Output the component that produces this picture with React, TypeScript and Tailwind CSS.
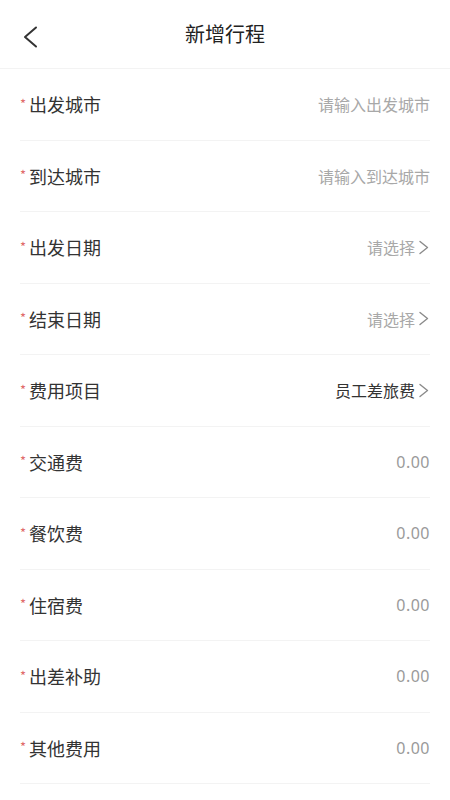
type Row = {
  label: string
  value: string
  kind: 'placeholder' | 'select' | 'value' | 'amount'
}

const rows: Row[] = [
  { label: '出发城市', value: '请输入出发城市', kind: 'placeholder' },
  { label: '到达城市', value: '请输入到达城市', kind: 'placeholder' },
  { label: '出发日期', value: '请选择', kind: 'select' },
  { label: '结束日期', value: '请选择', kind: 'select' },
  { label: '费用项目', value: '员工差旅费', kind: 'value' },
  { label: '交通费', value: '0.00', kind: 'amount' },
  { label: '餐饮费', value: '0.00', kind: 'amount' },
  { label: '住宿费', value: '0.00', kind: 'amount' },
  { label: '出差补助', value: '0.00', kind: 'amount' },
  { label: '其他费用', value: '0.00', kind: 'amount' },
]

function BackArrow() {
  return (
    <svg className="absolute left-[22px] top-[26px]" width="18" height="22" viewBox="0 0 18 22" fill="none">
      <polyline points="14,1.5 3,11 14,20.5" stroke="#333" strokeWidth="2" strokeLinecap="round" strokeLinejoin="round" />
    </svg>
  )
}

function Arrow() {
  return (
    <svg className="ml-[3px]" width="12" height="15" viewBox="0 0 12 15" fill="none">
      <polyline points="2,1.5 9.5,7.5 2,13.5" stroke="#8a8a8a" strokeWidth="1.4" strokeLinecap="round" strokeLinejoin="round" />
    </svg>
  )
}

export default function App() {
  return (
    <div
      className="w-[450px] h-[800px] bg-white overflow-hidden"
      style={{ fontFamily: '"Noto Sans CJK SC", "Noto Sans", sans-serif' }}
    >
      {/* Header */}
      <div className="relative h-[69px] flex items-center justify-center border-b border-[#f3f3f3]">
        <BackArrow />
        <span className="text-[20px] text-[#222] leading-none">新增行程</span>
      </div>

      {/* Form */}
      <div className="mx-5">
        {rows.map((r, i) => (
          <div
            key={i}
            className="h-[71.5px] flex items-center justify-between border-b border-[#f3f3f3]"
          >
            <div className="flex items-center">
              <span className="text-[13px] text-[#e06a6a] leading-none w-[9px] -mt-[2px]">*</span>
              <span className="text-[18px] text-[#333] leading-none">{r.label}</span>
            </div>
            <div className="flex items-center">
              {r.kind === 'amount' ? (
                <span className="text-[16px] text-[#9a9a9a] leading-none tracking-[0.5px]" style={{ fontFamily: '"Noto Sans", sans-serif' }}>
                  {r.value}
                </span>
              ) : (
                <span
                  className={
                    'text-[16px] leading-none ' +
                    (r.kind === 'value' ? 'text-[#333]' : 'text-[#a8a8a8]')
                  }
                >
                  {r.value}
                </span>
              )}
              {(r.kind === 'select' || r.kind === 'value') && <Arrow />}
            </div>
          </div>
        ))}
      </div>
    </div>
  )
}
